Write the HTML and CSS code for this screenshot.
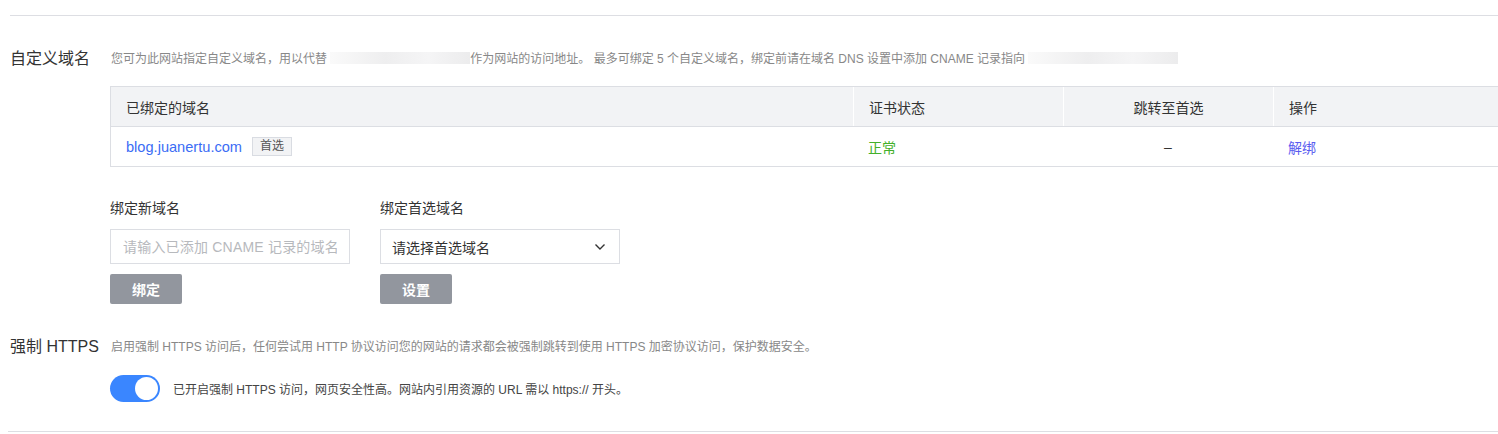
FILE: index.html
```html
<!DOCTYPE html>
<html lang="zh-CN">
<head>
<meta charset="utf-8">
<title>自定义域名</title>
<link rel="stylesheet" href="styles.css">
</head>
<body>
<div class="page">
  <div class="rule"></div>

  <section class="section domains">
    <div class="sec-title">自定义域名</div>
    <div class="sec-body">
      <p class="desc">您可为此网站指定自定义域名，用以代替 <span class="mask m1"></span>作为网站的访问地址。 最多可绑定 5 个自定义域名，绑定前请在域名 DNS 设置中添加 CNAME 记录指向 <span class="mask m2"></span></p>

      <div class="table">
        <div class="row head">
          <div class="cell c1">已绑定的域名</div>
          <div class="cell c2">证书状态</div>
          <div class="cell c3 center">跳转至首选</div>
          <div class="cell c4">操作</div>
        </div>
        <div class="row">
          <div class="cell c1"><a class="link" href="#">blog.juanertu.com</a><span class="tag">首选</span></div>
          <div class="cell c2"><span class="ok">正常</span></div>
          <div class="cell c3 center">–</div>
          <div class="cell c4"><a class="op" href="#">解绑</a></div>
        </div>
      </div>

      <div class="forms">
        <div class="form">
          <div class="label">绑定新域名</div>
          <input class="input" type="text" placeholder="请输入已添加 CNAME 记录的域名">
          <button class="btn">绑定</button>
        </div>
        <div class="form">
          <div class="label">绑定首选域名</div>
          <div class="select">
            <span>请选择首选域名</span>
            <svg width="12" height="8" viewBox="0 0 12 8"><path d="M1.5 1.5 L6 6 L10.5 1.5" fill="none" stroke="#333" stroke-width="1.4"/></svg>
          </div>
          <button class="btn">设置</button>
        </div>
      </div>
    </div>
  </section>

  <section class="section https">
    <div class="sec-title">强制 HTTPS</div>
    <div class="sec-body">
      <p class="desc">启用强制 HTTPS 访问后，任何尝试用 HTTP 协议访问您的网站的请求都会被强制跳转到使用 HTTPS 加密协议访问，保护数据安全。</p>
      <div class="switch-row">
        <span class="switch"><span class="knob"></span></span>
        <span class="switch-text">已开启强制 HTTPS 访问，网页安全性高。网站内引用资源的 URL 需以 https:// 开头。</span>
      </div>
    </div>
  </section>

  <div class="rule bottom"></div>
</div>
</body>
</html>
```
FILE: styles.css
```css
* { box-sizing: border-box; }
html, body { margin: 0; padding: 0; background: #fff; }
body {
  font-family: "Liberation Sans", "Noto Sans CJK SC", sans-serif;
  color: #333;
  overflow: hidden;
}
.page {
  width: 1498px;
  height: 434px;
  padding: 15px 0 0 10px;
}
.rule { height: 1px; background: #dddee3; }
.rule.bottom { margin-top: 29px; margin-left: -2px; }

.section { display: flex; }
.domains { margin-top: 32px; }
.sec-title {
  width: 100px;
  flex: none;
  font-size: 16px;
  line-height: 22px;
  color: #333;
}
.sec-body { flex: 1; min-width: 0; }
.desc {
  margin: 0;
  font-size: 12px;
  line-height: 22px;
  color: #888;
  white-space: nowrap;
  padding-left: 1px;
}
.mask { display: inline-block; height: 12px; vertical-align: -1px; background: linear-gradient(90deg, #fafafa, #eeeeef 40%, #f5f5f6 70%, #ececed); }
.m1 { width: 140px; }
.m2 { width: 150px; }

.table {
  margin-top: 16px;
  width: 1400px;
  border: 1px solid #dcdee3;
  border-right: none;
}
.row { display: flex; height: 40px; }
.row.head { background: #f2f3f5; border-bottom: 1px solid #dcdee3; height: 40px; }
.row + .row { height: 39px; }
.cell {
  display: flex;
  align-items: center;
  padding-left: 15px;
  font-size: 14px;
  color: #333;
}
.head .cell + .cell { border-left: 1px solid #fff; }
.c1 { width: 742px; }
.c2 { width: 210px; }
.c3 { width: 210px; }
.c4 { flex: 1; }
.center { justify-content: center; padding-left: 0; }
.link { color: #3b6df5; text-decoration: none; font-size: 14.6px; }
.tag {
  margin-left: 10px;
  font-size: 12px;
  color: #555;
  background: #f2f3f5;
  border: 1px solid #d9dce2;
  padding: 0 7px;
  line-height: 17px;
  height: 19px;
}
.ok { color: #43b02a; }
.op { color: #5a5cf0; text-decoration: none; }

.forms { display: flex; gap: 30px; margin-top: 31px; }
.form { display: flex; flex-direction: column; width: 240px; }
.label { font-size: 14px; line-height: 20px; color: #333; }
.input {
  margin-top: 11px;
  height: 35px;
  width: 240px;
  border: 1px solid #dcdee3;
  padding: 0 12px;
  font-family: inherit;
  font-size: 14px;
  letter-spacing: 0.2px;
  color: #333;
  outline: none;
}
.input::placeholder { color: #b7b9bd; }
.select {
  margin-top: 11px;
  height: 35px;
  border: 1px solid #dcdee3;
  padding: 0 13px 0 11px;
  display: flex;
  align-items: center;
  justify-content: space-between;
  font-size: 14px;
  color: #333;
}
.btn {
  margin-top: 10px;
  width: 72px;
  height: 30px;
  border: none;
  border-radius: 2px;
  background: #92969e;
  color: #fff;
  font-family: inherit;
  font-size: 14px;
  font-weight: bold;
  padding: 0;
  align-self: flex-start;
}

.https { margin-top: 32px; }
.switch-row { display: flex; align-items: center; margin-top: 17px; }
.switch {
  width: 50px;
  height: 27px;
  border-radius: 14px;
  background: #3a86ff;
  position: relative;
  flex: none;
}
.knob {
  position: absolute;
  right: 2px;
  top: 2px;
  width: 23px;
  height: 23px;
  border-radius: 50%;
  background: #fff;
}
.switch-text { margin-left: 13px; font-size: 12px; color: #444; }
```
